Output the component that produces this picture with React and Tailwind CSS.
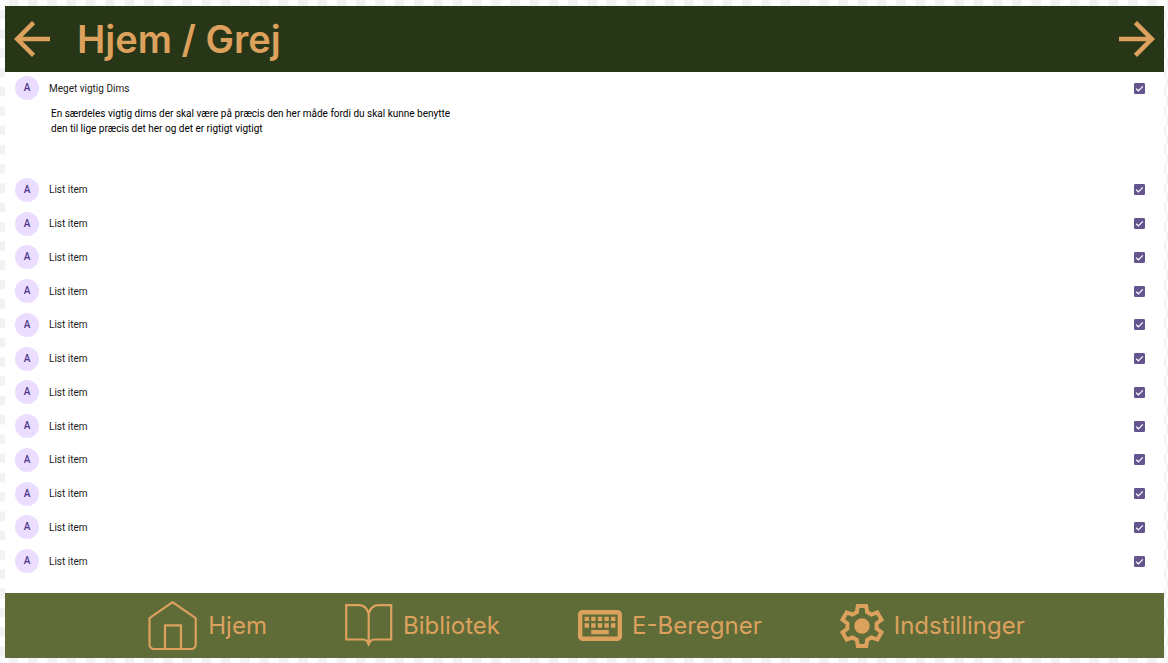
import React from "react";

const items = Array.from({ length: 12 }, (_, i) => ({ id: `item-${i + 1}`, title: "List item" }));

function ArrowLeft() {
  return (
    <svg viewBox="4 4 16 16" className="size-9" fill="currentColor" aria-hidden="true">
      <path d="M20 11H7.83l5.59-5.59L12 4l-8 8 8 8 1.41-1.41L7.83 13H20v-2z" />
    </svg>
  );
}

function ArrowRight() {
  return (
    <svg viewBox="4 4 16 16" className="size-9" fill="currentColor" aria-hidden="true">
      <path d="M12 4l-1.41 1.41L16.17 11H4v2h12.17l-5.58 5.59L12 20l8-8z" />
    </svg>
  );
}

function HomeIcon() {
  return (
    <svg viewBox="0 0 50 50" className="size-[50px]" fill="none" stroke="currentColor" strokeWidth="2.2" strokeLinejoin="round" aria-hidden="true">
      <path d="M1.5 17.2 24.5 1.2 47.7 17.2V43.5a4.5 4.5 0 0 1-4.5 4.5H6a4.5 4.5 0 0 1-4.5-4.5z" />
      <path d="M17 48V24.3H33V48" />
    </svg>
  );
}

function BookIcon() {
  return (
    <svg viewBox="0 0 48 44" className="h-11 w-12" fill="none" stroke="currentColor" strokeWidth="2.2" aria-hidden="true">
      <path d="M23.7 9.5C22 4 18 1.2 14 1.2H1.2V35.5H18C21 35.5 23 37 23.7 41C24.4 37 26.4 35.5 29.4 35.5H46.2V1.2H33.4C29.4 1.2 25.4 4 23.7 9.5V41" />
      <path d="M21.5 36.5H26L23.7 43z" fill="currentColor" stroke="none" />
    </svg>
  );
}

function KeyboardIcon() {
  return (
    <svg viewBox="2 5 20 14" className="h-[31px] w-11" fill="currentColor" aria-hidden="true">
      <path fillRule="evenodd" d="M4 5h16a2 2 0 0 1 2 2v10a2 2 0 0 1-2 2H4a2 2 0 0 1-2-2V7a2 2 0 0 1 2-2zM4 7v10h16V7z" />
      <path d="M5 8h2v2H5zM8 8h2v2H8zM11 8h2v2h-2zM14 8h2v2h-2zM17 8h2v2h-2zM5 11h2v2H5zM8 11h2v2H8zM11 11h2v2h-2zM14 11h2v2h-2zM17 11h2v2h-2zM8 14h8v2H8z" />
    </svg>
  );
}

function GearIcon() {
  return (
    <svg viewBox="0 0 44 46" className="h-[46px] w-11" aria-hidden="true">
      <path
        d="M17.8 3H26.2L27.2 9.2L31.5 11.6L37.3 9.4L41.5 16.6L36.6 20.5V25.5L41.5 29.4L37.3 36.6L31.5 34.4L27.2 36.8L26.2 43H17.8L16.8 36.8L12.5 34.4L6.7 36.6L2.5 29.4L7.4 25.5V20.5L2.5 16.6L6.7 9.4L12.5 11.6L16.8 9.2Z"
        fill="none"
        stroke="currentColor"
        strokeWidth="4"
      />
      <circle cx="22" cy="23" r="7.7" fill="currentColor" />
    </svg>
  );
}

function Row({ id, title }) {
  return (
    <div className="flex items-center gap-[10px] pr-[19px] pl-[10px]">
      <span className="flex size-6 shrink-0 items-center justify-center rounded-full bg-[#eaddff] text-[10px] leading-none font-medium text-[#4f378a]">
        A
      </span>
      <label htmlFor={id} className="flex-1 text-[10px] leading-[15px] text-[#1d1b20]">
        {title}
      </label>
      <span className="relative flex size-[11px] shrink-0">
        <input id={id} type="checkbox" defaultChecked className="peer size-[11px] appearance-none rounded-[1px] border border-[#65558f] checked:bg-[#65558f]" />
        <svg viewBox="0 0 11 11" className="pointer-events-none absolute inset-0 hidden size-[11px] peer-checked:block" fill="none" stroke="white" strokeWidth="1.2" aria-hidden="true">
          <path d="M2.2 5.7 4.4 7.8 8.8 3.3" />
        </svg>
      </span>
    </div>
  );
}

const nav = [
  { label: "Hjem", Icon: HomeIcon },
  { label: "Bibliotek", Icon: BookIcon },
  { label: "E-Beregner", Icon: KeyboardIcon },
  { label: "Indstillinger", Icon: GearIcon },
];

export default function App() {
  return (
    <div className="flex min-h-screen flex-col bg-[repeating-conic-gradient(#f2f2f2_0_25%,#ffffff_0_50%)] bg-[length:1.653%_2.911%] bg-[position:-1px_0px] pt-[6px] pr-1 pb-[5px] pl-[5px] font-['Roboto',sans-serif]">
      <header className="flex h-[66px] shrink-0 items-center justify-between bg-[#283618] px-[9px] font-['Inter',sans-serif] text-[#dda15e]">
        <div className="flex items-center gap-[27px]">
          <button type="button" aria-label="Tilbage">
            <ArrowLeft />
          </button>
          <h1 className="text-[38px] leading-none font-semibold">Hjem / Grej</h1>
        </div>
        <button type="button" aria-label="Frem">
          <ArrowRight />
        </button>
      </header>

      <main className="flex flex-1 flex-col bg-white pb-[15px]">
        <section className="pt-1">
          <Row id="dims" title="Meget vigtig Dims" />
          <p className="mt-[6px] max-w-[480px] pl-[46px] text-[10px] leading-[15px] text-black">
            En særdeles vigtig dims der skal være på præcis den her måde fordi du skal kunne benytte
            <br />
            den til lige præcis det her og det er rigtigt vigtigt
          </p>
        </section>
        <ul className="mt-[37px] grid flex-1 auto-rows-fr">
          {items.map((item) => (
            <li key={item.id} className="grid items-center">
              <Row {...item} />
            </li>
          ))}
        </ul>
      </main>

      <footer className="flex h-[65px] shrink-0 bg-[#606c38] pl-1 font-['Inter',sans-serif] text-2xl font-normal text-[#dda15e]">
        <nav className="flex flex-1 items-center justify-center gap-[78px]">
          {nav.map(({ label, Icon }) => (
            <a key={label} href="#" className="flex items-center gap-[10px]">
              <Icon />
              {label}
            </a>
          ))}
        </nav>
      </footer>
    </div>
  );
}
